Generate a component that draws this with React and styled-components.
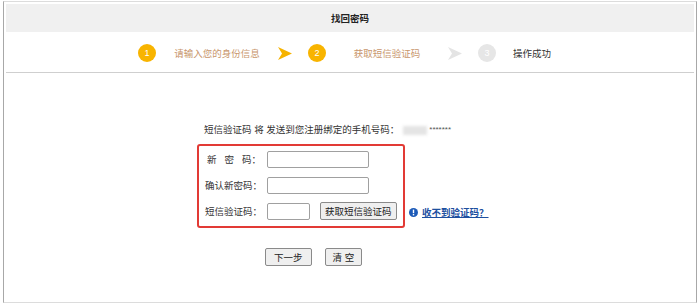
import * as React from 'react';
import styled, { createGlobalStyle } from 'styled-components';

const GlobalStyle = createGlobalStyle`
  body {
    margin: 0;
    background: #fff;
    font-family: "Liberation Sans", "Noto Sans CJK SC", sans-serif;
    font-size: 9.5px;
    color: #333;
  }
`;

const Page = styled.div`
  margin: 1px 3px 0 3px;
  height: 302px;
  box-sizing: border-box;
  padding: 2px;
  border: 1px solid #dcdcdc;
  border-left-color: #a8a8a8;
  border-right-color: #a8a8a8;
`;

const Header = styled.div`
  height: 28px;
  background: #f0f0f0;
  display: flex;
  align-items: center;
  justify-content: center;
  font-weight: bold;
  color: #222;
`;

const Steps = styled.div`
  height: 41px;
  box-sizing: border-box;
  padding: 2px 0 0 132px;
  border-bottom: 1px solid #cfcfcf;
  display: flex;
  align-items: center;
`;

const Circle = styled.div`
  width: 18px;
  height: 18px;
  border-radius: 50%;
  background: ${p => (p.$done ? '#f8b400' : '#e6e6e6')};
  color: #fff;
  display: flex;
  align-items: center;
  justify-content: center;
  font-size: 9px;
  flex: none;
`;

const StepLabel = styled.div`
  width: ${p => (p.$last ? 'auto' : '122px')};
  padding-left: ${p => (p.$last ? '17px' : '0')};
  text-align: ${p => (p.$last ? 'left' : 'center')};
  color: ${p => (p.$done ? '#c8966c' : '#333')};
`;

const Arrow = styled.svg`
  width: 14px;
  height: 13px;
  margin-right: 16px;
  flex: none;
`;

const Content = styled.div`
  padding: 50px 0 0 191px;
`;

const Notice = styled.div`
  padding-left: 7px;
  height: 14px;
  line-height: 14px;
  display: flex;
  align-items: center;
`;

const Blurred = styled.span`
  display: inline-block;
  margin-left: 4px;
  width: 24px;
  height: 9px;
  background: #e4e4e4;
  filter: blur(1.5px);
`;

const Stars = styled.span`
  font-size: 8px;
  margin-left: 2px;
  color: #555;
`;

const FormWrap = styled.div`
  margin-top: 7px;
  display: flex;
  align-items: flex-end;
`;

const RedBox = styled.div`
  width: 208px;
  box-sizing: border-box;
  border: 2px solid #e23a35;
  border-radius: 3px;
  padding: 4px 0 6px 6px;
  display: flex;
  flex-direction: column;
  gap: 8px;
`;

const Row = styled.div`
  display: flex;
  align-items: center;
  height: 18px;
`;

const Label = styled.div`
  width: 56px;
  text-align: right;
  margin-right: 6px;
  white-space: nowrap;
  color: #333;
`;

const Spaced = styled.span`
  letter-spacing: 8px;
`;

const Input = styled.input`
  width: ${p => p.$w}px;
  height: 17px;
  box-sizing: border-box;
  border: 1px solid #a0a0a0;
  border-radius: 2px;
  padding: 0 3px;
  font: inherit;
  outline: none;
`;

const Button = styled.button`
  height: 18px;
  box-sizing: border-box;
  padding: 0 ${p => p.$pad || 5}px;
  margin-left: ${p => p.$ml || 0}px;
  border: 1px solid #8a8a8a;
  border-radius: 2px;
  background: #efefef;
  font: inherit;
  color: #222;
  line-height: 15px;
  cursor: pointer;
`;

const Help = styled.a`
  margin: 0 0 9px 4px;
  display: flex;
  align-items: center;
  gap: 4px;
  color: #1d4f9f;
  font-weight: bold;
  text-decoration: underline;
  cursor: pointer;
`;

const Actions = styled.div`
  margin: 20px 0 0 68px;
  display: flex;
  gap: 13px;
`;

function StepArrow({ color }) {
  return (
    <Arrow viewBox="0 0 14 13">
      <path d="M0 0 L14 6.5 L0 13 L4 6.5 Z" fill={color} />
    </Arrow>
  );
}

export default function App() {
  return (
    <>
      <GlobalStyle />
      <Page>
        <Header>找回密码</Header>
        <Steps>
          <Circle $done>1</Circle>
          <StepLabel $done>请输入您的身份信息</StepLabel>
          <StepArrow color="#f6b300" />
          <Circle $done>2</Circle>
          <StepLabel $done>获取短信验证码</StepLabel>
          <StepArrow color="#e4e4e4" />
          <Circle>3</Circle>
          <StepLabel $last>操作成功</StepLabel>
        </Steps>
        <Content>
          <Notice>
            短信验证码 将 发送到您注册绑定的手机号码：
            <Blurred />
            <Stars>*******</Stars>
          </Notice>
          <FormWrap>
            <RedBox>
              <Row>
                <Label>
                  <Spaced>新密</Spaced>码：
                </Label>
                <Input type="password" $w={102} />
              </Row>
              <Row>
                <Label>确认新密码：</Label>
                <Input type="password" $w={102} />
              </Row>
              <Row>
                <Label>短信验证码：</Label>
                <Input type="text" $w={43} />
                <Button $ml={10} $pad={4}>获取短信验证码</Button>
              </Row>
            </RedBox>
            <Help>
              <svg width="9" height="9" viewBox="0 0 9 9">
                <circle cx="4.5" cy="4.5" r="4.5" fill="#1d5bb8" />
                <rect x="3.8" y="1.6" width="1.4" height="3.6" fill="#fff" />
                <rect x="3.8" y="6" width="1.4" height="1.4" fill="#fff" />
              </svg>
              收不到验证码？
            </Help>
          </FormWrap>
          <Actions>
            <Button $pad={8}>下一步</Button>
            <Button $pad={7}>清 空</Button>
          </Actions>
        </Content>
      </Page>
    </>
  );
}
